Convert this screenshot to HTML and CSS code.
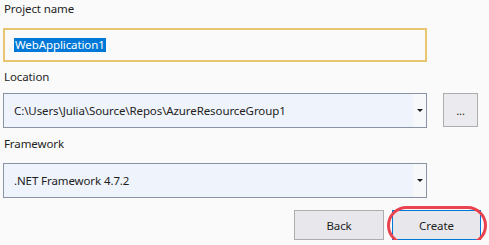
FILE: index.html
```html
<!DOCTYPE html>
<html lang="en">
<head>
    <meta charset="UTF-8">
    <title>Configure your new project</title>
    <link rel="stylesheet" href="styles.css">
</head>
<body>
    <div class="form">
        <label class="lebel first">Project name</label>
        <div class="textbox"><span class="selected">WebApplication1</span></div>

        <label class="lebel second">Location</label>
        <div class="row">
            <div class="combo">
                <span class="value">C:\Users\Julia\Source\Repos\AzureResourceGroup1</span>
                <span class="arrow"></span>
            </div>
            <div class="browse">...</div>
        </div>

        <label class="lebel third">Framework</label>
        <div class="combo">
            <span class="value">.NET Framework 4.7.2</span>
            <span class="arrow"></span>
        </div>

        <div class="buttons">
            <div class="btn">Back</div>
            <div class="btn primary">Create<span class="ring"></span></div>
        </div>
    </div>
</body>
</html>
```

FILE: styles.css
```css
*{
    padding: 0px;
    margin: 0px;
    box-sizing: border-box;
}
body{
    background-color: #fafafa;
    font-family: "Noto Sans", sans-serif;
    font-size: 11.5px;
    letter-spacing: -0.1px;
    color: #1e1e1e;
}
.form{
    display: flex;
    flex-direction: column;
    padding-left: 3px;
    width: 427px;
}
.lebel{
    display: block;
    line-height: 17px;
    padding-left: 1px;
}
.first{
    margin-bottom: 11px;
}
.second{
    margin-top: 6px;
    margin-bottom: 8px;
}
.third{
    margin-top: 7px;
    margin-bottom: 11px;
}
.textbox{
    height: 34px;
    border: 2px solid #e8c570;
    display: flex;
    align-items: center;
    padding-left: 9px;
}
.selected{
    background-color: #0078d7;
    color: white;
    line-height: 14px;
    padding: 0px 1px;
}
.row{
    display: flex;
    gap: 16px;
    width: 476px;
}
.combo{
    width: 424px;
    flex: none;
    height: 35px;
    border: 1px solid #8a93a3;
    background-color: #eff3fb;
    display: flex;
    align-items: center;
    padding-left: 10px;
}
.value{
    flex: 1;
}
.arrow{
    width: 13px;
    align-self: stretch;
    background-color: #f7f8fa;
    display: flex;
    align-items: center;
    justify-content: center;
}
.arrow::after{
    content: "";
    border-left: 3px solid transparent;
    border-right: 3px solid transparent;
    border-top: 3px solid #1e1e1e;
}
.browse{
    width: 35px;
    height: 34px;
    border: 1px solid #adadad;
    background-color: #ebebef;
    display: flex;
    align-items: center;
    justify-content: center;
    font-size: 11px;
}
.buttons{
    display: flex;
    gap: 8px;
    margin-top: 12px;
    width: 478px;
    justify-content: flex-end;
}
.btn{
    width: 90px;
    height: 30px;
    border: 1px solid #adadad;
    background-color: #e8e8ec;
    display: flex;
    align-items: center;
    justify-content: center;
    position: relative;
}
.primary{
    border-color: #0078d7;
    width: 89px;
}
.ring{
    position: absolute;
    left: -6px;
    top: -5px;
    right: -7px;
    bottom: -6px;
    border: 3px solid #e8434e;
    border-radius: 20px;
}
```
